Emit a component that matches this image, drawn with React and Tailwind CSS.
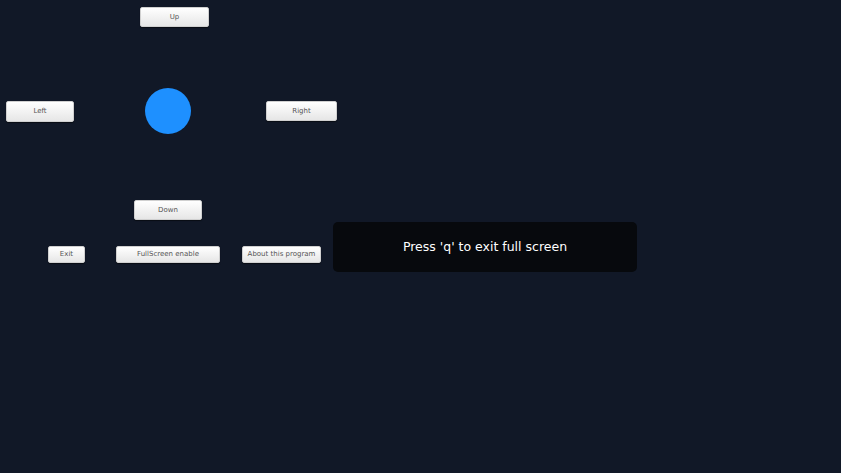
function Btn({ label, className }) {
  return (
    <button
      className={
        "flex items-center justify-center bg-gradient-to-b from-white to-[#e6e6e6] border border-[#d0d0d0] rounded-[2px] shadow-[0_1px_1px_rgba(0,0,0,0.5)] text-[7px] text-[#555] " +
        className
      }
    >
      {label}
    </button>
  );
}

export default function App() {
  return (
    <div className="w-[841px] h-[473px] bg-[#111827] font-['DejaVu_Sans',sans-serif] flex flex-col">
      <div className="flex pl-[140px] pt-[7px]">
        <Btn label="Up" className="w-[69px] h-[20px]" />
      </div>

      <div className="flex items-center mt-[61px] h-[46px]">
        <Btn label="Left" className="ml-[6px] w-[68px] h-[21px]" />
        <div className="ml-[71px] w-[46px] h-[46px] rounded-full bg-[#1e90ff]" />
        <Btn label="Right" className="ml-[75px] w-[71px] h-[20px]" />
      </div>

      <div className="flex pl-[134px] mt-[66px]">
        <Btn label="Down" className="w-[68px] h-[20px]" />
      </div>

      <div className="flex items-start mt-[2px]">
        <div className="flex items-center mt-[24px] h-[17px]">
          <Btn label="Exit" className="ml-[48px] w-[37px] h-[17px]" />
          <Btn label="FullScreen enable" className="ml-[31px] w-[104px] h-[17px]" />
          <Btn label="About this program" className="ml-[22px] w-[79px] h-[17px]" />
        </div>
        <div className="ml-[12px] w-[304px] h-[50px] rounded-[5px] bg-[#07090d] flex items-center justify-center text-white text-[12.5px]">
          Press 'q' to exit full screen
        </div>
      </div>
    </div>
  );
}
